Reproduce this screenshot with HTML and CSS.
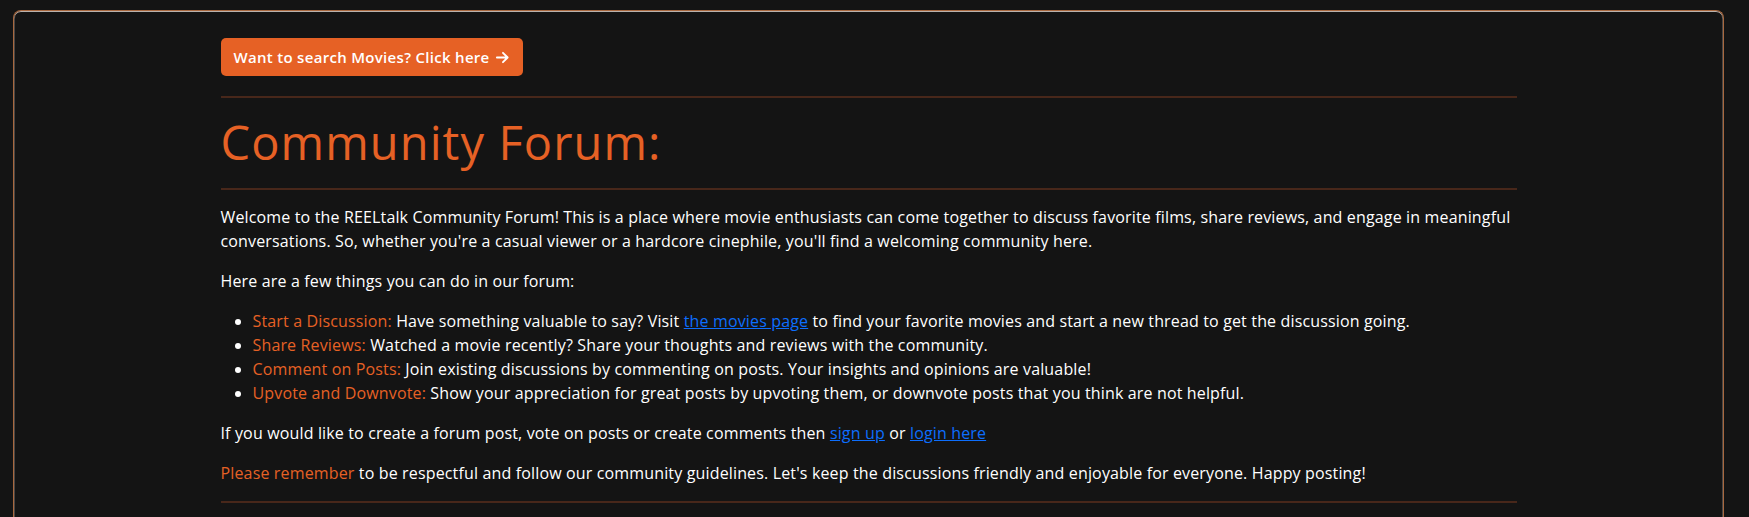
FILE: index.html
```html
<!DOCTYPE html>
<html lang="en">
<head>
<meta charset="utf-8">
<title>REELtalk Community Forum</title>
<link rel="stylesheet" href="styles.css">
</head>
<body>
<div class="card">
  <div class="container">
    <a class="btn" href="#">Want to search Movies? Click here <svg class="arrow" viewBox="0 0 16 16" width="15" height="15"><path d="M2 8h11.5M8.5 3l5 5-5 5" fill="none" stroke="#fff" stroke-width="2" stroke-linecap="round" stroke-linejoin="round"/></svg></a>
    <hr class="rule rule-top">
    <h1 class="title">Community Forum:</h1>
    <hr class="rule rule-mid">
    <p class="text">Welcome to the REELtalk Community Forum! This is a place where movie enthusiasts can come together to discuss favorite films, share reviews, and engage in meaningful conversations. So, whether you're a casual viewer or a hardcore cinephile, you'll find a welcoming community here.</p>
    <p class="text">Here are a few things you can do in our forum:</p>
    <ul class="list">
      <li><span class="accent">Start a Discussion:</span> Have something valuable to say? Visit <a class="link" href="#">the movies page</a> to find your favorite movies and start a new thread to get the discussion going.</li>
      <li><span class="accent">Share Reviews:</span> Watched a movie recently? Share your thoughts and reviews with the community.</li>
      <li><span class="accent">Comment on Posts:</span> Join existing discussions by commenting on posts. Your insights and opinions are valuable!</li>
      <li><span class="accent">Upvote and Downvote:</span> Show your appreciation for great posts by upvoting them, or downvote posts that you think are not helpful.</li>
    </ul>
    <p class="text">If you would like to create a forum post, vote on posts or create comments then <a class="link" href="#">sign up</a> or <a class="link" href="#">login here</a></p>
    <p class="text"><span class="accent">Please remember</span> to be respectful and follow our community guidelines. Let's keep the discussions friendly and enjoyable for everyone. Happy posting!</p>
    <hr class="rule rule-bottom">
  </div>
</div>
</body>
</html>
```

FILE: styles.css
```css
html, body {
  margin: 0;
  padding: 0;
  background: #141414;
  color: #ffffff;
  font-family: "Open Sans", "Liberation Sans", sans-serif;
  font-size: 16px;
  line-height: 1.5;
}

.card {
  margin: 10px 25px 0 13px;
  min-height: 600px;
  border: 1px solid #a8683f;
  border-bottom: none;
  border-radius: 8px 8px 0 0;
  box-shadow: inset 0 1px 0 #b9b2ad, inset 1px 0 0 #4a4745, inset -1px 0 0 #4a4745;
  background: #141414;
  padding-top: 27px;
}

.container {
  max-width: 1296px;
  margin: 0 auto;
}

.btn {
  display: inline-flex;
  align-items: center;
  gap: 5px;
  height: 38px;
  box-sizing: border-box;
  padding: 6px 13px;
  background: #e66125;
  color: #fff;
  border-radius: 5px;
  font-weight: 600;
  font-size: 15px;
  letter-spacing: 0.3px;
  text-decoration: none;
}

.arrow {
  display: block;
}

.rule {
  border: 0;
  height: 2px;
  background: #48271a;
  margin: 0;
}

.rule-top {
  margin-top: 20px;
  margin-bottom: 15px;
}

.title {
  margin: 0 0 17px;
  font-size: 47px;
  line-height: 58px;
  font-weight: 400;
  letter-spacing: 1.1px;
  color: #e66125;
}

.rule-mid {
  margin-bottom: 15px;
}

.text {
  margin: 0 0 16px;
  font-weight: 500;
  letter-spacing: 0.15px;
}

.list {
  margin: 0 0 16px;
  padding-left: 32px;
  font-weight: 500;
  letter-spacing: 0.15px;
}

.accent {
  color: #e66125;
  font-weight: 400;
}

.link {
  color: #0d6efd;
  text-decoration: underline;
}
```
